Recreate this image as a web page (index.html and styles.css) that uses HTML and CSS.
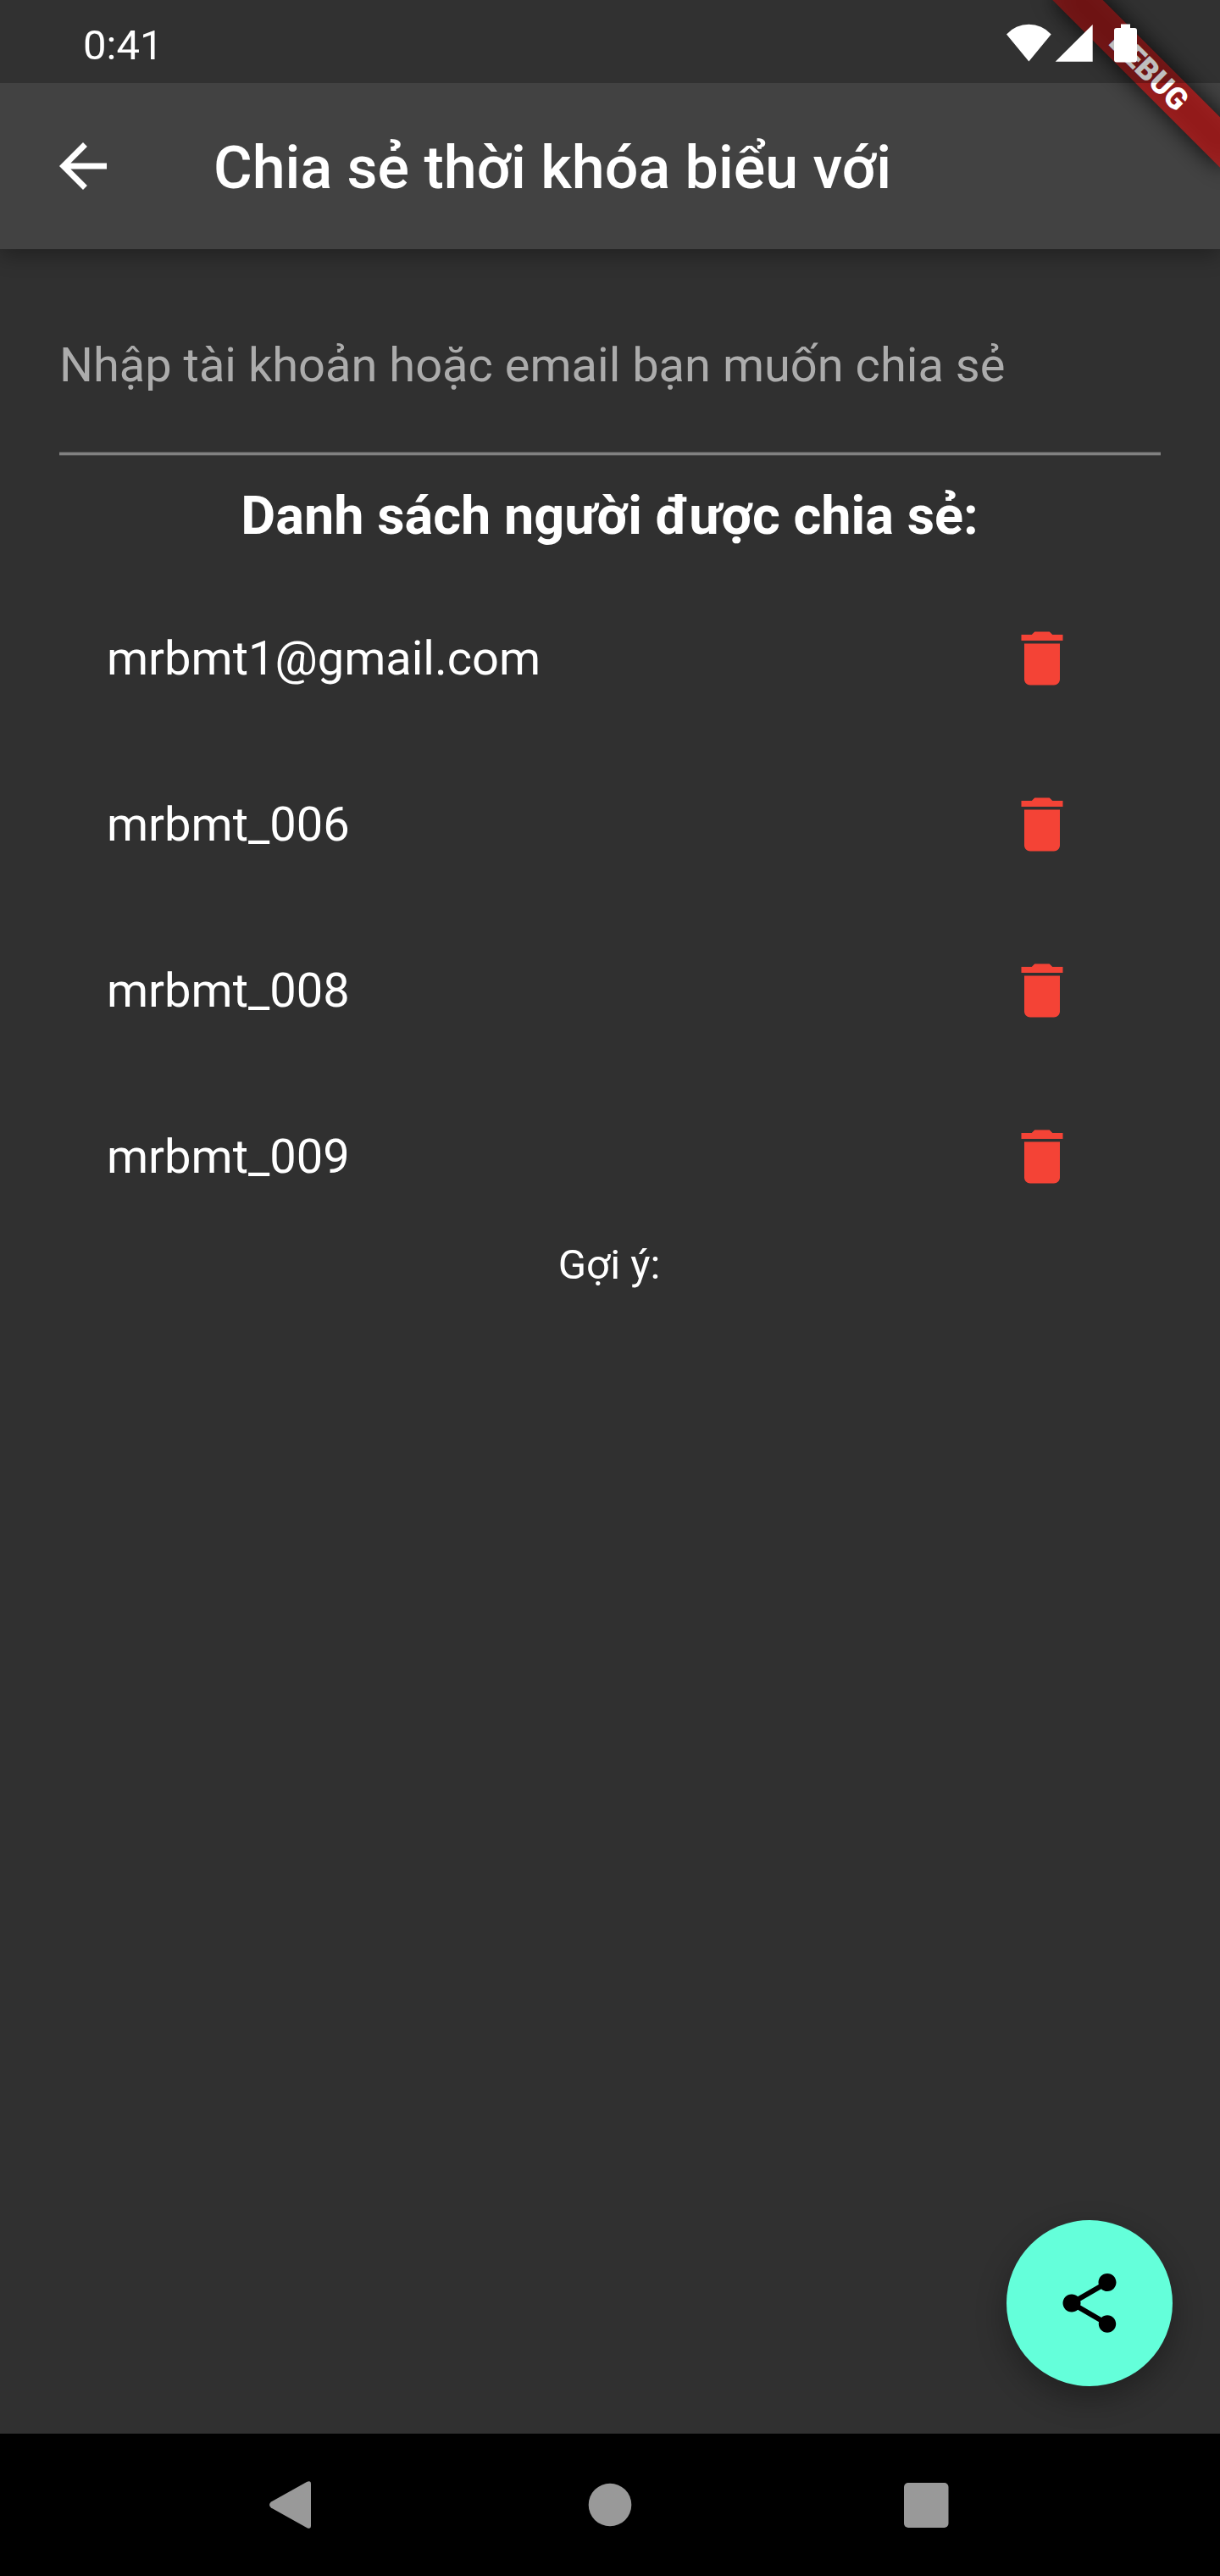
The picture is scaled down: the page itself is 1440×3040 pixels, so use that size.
FILE: index.html
```html
<!DOCTYPE html>
<html lang="vi">
<head>
<meta charset="utf-8">
<title>Chia sẻ thời khóa biểu với</title>
<link rel="stylesheet" href="styles.css">
</head>
<body>
<svg class="sprite" aria-hidden="true">
  <symbol id="icon-delete" viewBox="0 0 24 24"><path d="M6 19c0 1.1.9 2 2 2h8c1.1 0 2-.9 2-2V7H6v12zM19 4h-3.5l-1-1h-5l-1 1H5v2h14V4z"/></symbol>
</svg>
<div class="screen">
  <header class="header">
    <div class="status-bar">
      <span class="clock">0:41</span>
      <svg class="status-icons" width="156" height="46" viewBox="0 0 156 46">
        <path d="M1 12.5A35.5 35.5 0 0 1 53.700 12.5L27.400 44.5z"/>
        <path d="M58.700 44.7 102.700 1v43.700z"/>
        <path d="M136 5V.5h11V5h5a3 3 0 0 1 3 3v34.500a3 3 0 0 1-3 3h-21a3 3 0 0 1-3-3V8a3 3 0 0 1 3-3z"/>
      </svg>
    </div>
    <div class="app-bar">
      <svg class="icon" viewBox="0 0 24 24"><path d="M20 11H7.830l5.590-5.590L12 4l-8 8 8 8 1.410-1.410L7.830 13H20v-2z"/></svg>
      <h1 class="title">Chia sẻ thời khóa biểu với</h1>
    </div>
    <div class="banner-clip">
      <div class="banner"><span class="banner-band">DEBUG</span></div>
    </div>
  </header>
  <main class="content">
    <div class="field"><span class="hint">Nhập tài khoản hoặc email bạn muốn chia sẻ</span></div>
    <h2 class="heading">Danh sách người được chia sẻ:</h2>
    <ul class="people">
      <li class="person"><span class="name">mrbmt1@gmail.com</span><svg class="icon delete"><use href="#icon-delete"/></svg></li>
      <li class="person"><span class="name">mrbmt_006</span><svg class="icon delete"><use href="#icon-delete"/></svg></li>
      <li class="person"><span class="name">mrbmt_008</span><svg class="icon delete"><use href="#icon-delete"/></svg></li>
      <li class="person"><span class="name">mrbmt_009</span><svg class="icon delete"><use href="#icon-delete"/></svg></li>
    </ul>
    <p class="suggest">Gợi ý:</p>
    <div class="fab">
      <svg class="icon" viewBox="0 0 24 24"><path d="M18 16.080c-.76 0-1.440.3-1.960.77L8.910 12.700c.05-.23.09-.46.09-.7s-.04-.47-.09-.7l7.050-4.110c.54.5 1.250.81 2.040.81 1.660 0 3-1.340 3-3s-1.340-3-3-3-3 1.340-3 3c0 .24.04.47.09.7L8.040 9.810C7.500 9.310 6.790 9 6 9c-1.660 0-3 1.340-3 3s1.340 3 3 3c.79 0 1.500-.31 2.040-.81l7.120 4.160c-.05.21-.08.43-.08.65 0 1.610 1.310 2.920 2.920 2.920s2.920-1.310 2.920-2.920-1.310-2.920-2.920-2.920z"/></svg>
    </div>
  </main>
  <nav class="nav-bar">
    <svg width="55" height="58" viewBox="0 0 55 58"><path d="M2 25.500 44.500 1.800Q49 0 49 4.500v49Q49 58 44.500 56.200L2 32.500Q-2 29 2 25.500z"/></svg>
    <svg width="52" height="52" viewBox="0 0 52 52"><circle cx="26" cy="26" r="25.300"/></svg>
    <svg width="53" height="53" viewBox="0 0 53 53"><rect width="52.500" height="53" rx="5"/></svg>
  </nav>
</div>
</body>
</html>
```
FILE: styles.css
```css
* { box-sizing: border-box; }

body {
  margin: 0;
  background: #303030;
  color: #fff;
  font-family: Roboto, "Noto Sans", sans-serif;
}

.sprite { display: none; }

.screen {
  display: flex;
  flex-direction: column;
  width: 1440px;
  height: 3040px;
  overflow: hidden;
}

.icon {
  flex: none;
  width: 84px;
  height: 84px;
  fill: currentColor;
}

/* Header */
.header {
  position: relative;
  z-index: 1;
  height: 294px;
  background: #424242;
  box-shadow: 0 8px 23px rgba(0, 0, 0, .3);
}

.status-bar {
  position: relative;
  z-index: 2;
  display: flex;
  justify-content: space-between;
  height: 98px;
  padding: 28px 97px 0 98px;
  background: rgba(0, 0, 0, .25);
}

.clock {
  font-size: 49px;
  line-height: 52px;
}

.status-icons { fill: #fff; }

.app-bar {
  display: flex;
  align-items: center;
  gap: 112px;
  height: 196px;
  padding: 0 56px;
}

.title {
  margin: 0;
  padding-top: 4px;
  font-size: 70px;
  font-weight: 500;
  line-height: 82px;
  white-space: nowrap;
}

/* Corner ribbon */
.banner-clip {
  position: absolute;
  z-index: 1;
  top: 0;
  right: 0;
  width: 280px;
  height: 280px;
  overflow: hidden;
}

.banner {
  position: absolute;
  top: 63px;
  right: -56px;
  width: 280px;
  height: 42px;
  transform: rotate(45deg);
}

.banner::before {
  content: "";
  position: absolute;
  inset: 0;
  background: rgba(0, 0, 0, .8);
  filter: blur(14px);
}

.banner-band {
  position: relative;
  display: block;
  background: rgba(183, 28, 28, .78);
  font-size: 35.7px;
  font-weight: 900;
  line-height: 42px;
  text-align: center;
}

/* Content */
.content {
  position: relative;
  flex: 1;
  padding: 56px 70px 0;
}

.field {
  display: flex;
  align-items: center;
  height: 187px;
  padding-bottom: 22px;
  border-bottom: 3px solid #818181;
  box-shadow: 0 1px 0 #4a4a4a, inset 0 -1px 0 #4a4a4a;
}

.hint {
  color: #acacac;
  font-size: 56px;
  line-height: 66px;
  white-space: nowrap;
}

.heading {
  margin: 0;
  padding: 35px 1px 0 0;
  font-size: 63px;
  font-weight: 700;
  line-height: 74px;
  text-align: center;
  white-space: nowrap;
}

.people {
  margin: 0;
  padding: 33px 0 0;
  list-style: none;
}

.person {
  display: flex;
  align-items: center;
  justify-content: space-between;
  height: 196px;
  padding: 0 98px 0 56px;
}

.name {
  font-size: 56px;
  line-height: 66px;
}

.delete { color: #f44336; }

.suggest {
  margin: 0;
  padding-right: 2px;
  font-size: 49px;
  line-height: 60px;
  text-align: center;
}

.fab {
  position: absolute;
  right: 56px;
  bottom: 56px;
  display: grid;
  place-items: center;
  width: 196px;
  height: 196px;
  border-radius: 50%;
  background: #64ffda;
  color: #000;
  box-shadow: 0 14px 36px rgba(0, 0, 0, .32);
}

/* System navigation */
.nav-bar {
  position: relative;
  display: flex;
  align-items: center;
  justify-content: space-between;
  height: 168px;
  padding: 0 320px 0 318px;
  background: #000;
  fill: #999;
}
```
